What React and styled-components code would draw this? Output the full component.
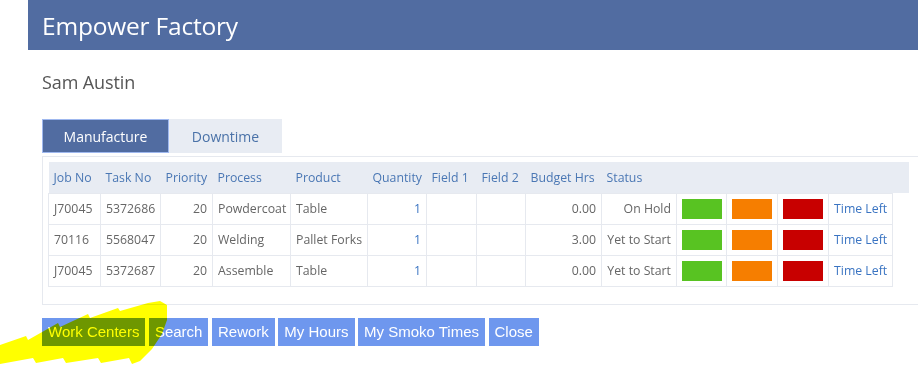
import React from "react";
import styled, { createGlobalStyle } from "styled-components";

const Global = createGlobalStyle`
  html { overflow: hidden; }
  html, body { margin: 0; padding: 0; background: #fff; }
  body { font-family: "Open Sans", "Noto Sans", sans-serif; min-height: 370px; }
`;

const Page = styled.div`
  position: relative;
  width: 1000px;
  height: 370px;
  padding-left: 28px;
  box-sizing: border-box;
`;

const Header = styled.header`
  height: 50px;
  background: #516ca1;
  display: flex;
  align-items: center;
  padding-left: 14px;
`;

const Title = styled.h1`
  margin: 0;
  font-family: "Open Sans", sans-serif;
  font-weight: 400;
  font-size: 24.5px;
  color: #fff;
  letter-spacing: -0.2px;
`;

const Content = styled.div`
  padding-left: 14px;
`;

const UserName = styled.div`
  margin-top: 20px;
  height: 22px;
  font-size: 18px;
  color: #555;
  letter-spacing: -0.1px;
`;

const Tabs = styled.div`
  display: flex;
  margin-top: 27px;
  height: 34px;
`;

const Tab = styled.div`
  box-sizing: border-box;
  width: ${(p) => p.$w}px;
  display: flex;
  align-items: center;
  justify-content: center;
  font-size: 14px;
  background: ${(p) => (p.$active ? "#516ca1" : "#e8ecf3")};
  color: ${(p) => (p.$active ? "#fff" : "#4a72a8")};
  border: 1px solid ${(p) => (p.$active ? "#9fb8ef" : "#e8ecf3")};
`;

const Panel = styled.div`
  margin-top: 3px;
  border: 1px solid #e6e9ef;
  border-right: none;
  padding: 5px 0 17px 5px;
`;

const Table = styled.table`
  border-collapse: collapse;
  table-layout: fixed;
  width: 860px;
  font-size: 12.3px;
`;

const Th = styled.th`
  background: #e8ecf3;
  color: #4a77b4;
  font-weight: 400;
  text-align: left;
  height: 31px;
  padding: 0 5px;
  white-space: nowrap;
  box-sizing: border-box;
`;

const Td = styled.td`
  border: 1px solid #e6e9ef;
  height: 31px;
  padding: 0 5px;
  box-sizing: border-box;
  color: ${(p) => (p.$link ? "#3a74c2" : "#666")};
  text-align: ${(p) => (p.$right ? "right" : "left")};
  white-space: nowrap;
`;

const Swatch = styled.div`
  width: 40px;
  height: 20px;
  background: ${(p) => p.$c};
`;

const Buttons = styled.div`
  display: flex;
  gap: 3.5px;
  margin-top: 13px;
`;

const Button = styled.button`
  height: 28px;
  border: none;
  background: #6e97ee;
  color: #fff;
  font-family: "Liberation Sans", Arial, sans-serif;
  font-size: 15px;
  padding: 0 6px;
  cursor: pointer;
`;

const Highlight = styled.svg`
  position: absolute;
  left: 0;
  top: 0;
  width: 200px;
  height: 370px;
  mix-blend-mode: multiply;
  pointer-events: none;
`;

const cols = [52, 60, 52, 78, 77, 59, 50, 49, 76, 75, 50, 51, 51, 64, 16];
const heads = ["Job No", "Task No", "Priority", "Process", "Product", "Quantity", "Field 1", "Field 2", "Budget Hrs", "Status", "", "", "", "", ""];

const rows = [
  ["J70045", "5372686", "20", "Powdercoat", "Table", "1", "0.00", "On Hold"],
  ["70116", "5568047", "20", "Welding", "Pallet Forks", "1", "3.00", "Yet to Start"],
  ["J70045", "5372687", "20", "Assemble", "Table", "1", "0.00", "Yet to Start"],
];

const highlightPts =
  "0,345 26,336 28,340 58,323 60,327 88,314 90,318 118,308 120,311 148,303 160,301 167,305 167,320 162,334 152,349 140,361 132,364 129,358 101,363 98,358 66,363 63,358 36,363 33,358 0,364";

export default function App() {
  return (
    <>
      <Global />
      <Page>
        <Header>
          <Title>Empower Factory</Title>
        </Header>
        <Content>
          <UserName>Sam Austin</UserName>
          <Tabs>
            <Tab $active $w={127}>Manufacture</Tab>
            <Tab $w={113}>Downtime</Tab>
          </Tabs>
          <Panel>
            <Table>
              <colgroup>
                {cols.map((w, i) => (
                  <col key={i} style={{ width: w }} />
                ))}
              </colgroup>
              <thead>
                <tr>
                  {heads.map((h, i) => (
                    <Th key={i}>{h}</Th>
                  ))}
                </tr>
              </thead>
              <tbody>
                {rows.map((r, i) => (
                  <tr key={i}>
                    <Td>{r[0]}</Td>
                    <Td>{r[1]}</Td>
                    <Td $right>{r[2]}</Td>
                    <Td>{r[3]}</Td>
                    <Td>{r[4]}</Td>
                    <Td $right $link>{r[5]}</Td>
                    <Td />
                    <Td />
                    <Td $right>{r[6]}</Td>
                    <Td $right>{r[7]}</Td>
                    <Td><Swatch $c="#58c322" /></Td>
                    <Td><Swatch $c="#f67e00" /></Td>
                    <Td><Swatch $c="#c80000" /></Td>
                    <Td $link>Time Left</Td>
                  </tr>
                ))}
              </tbody>
            </Table>
          </Panel>
          <Buttons>
            <Button>Work Centers</Button>
            <Button>Search</Button>
            <Button>Rework</Button>
            <Button>My Hours</Button>
            <Button>My Smoko Times</Button>
            <Button>Close</Button>
          </Buttons>
        </Content>
        <Highlight viewBox="0 0 200 370">
          <polygon points={highlightPts} fill="#ffff00" />
        </Highlight>
      </Page>
    </>
  );
}
